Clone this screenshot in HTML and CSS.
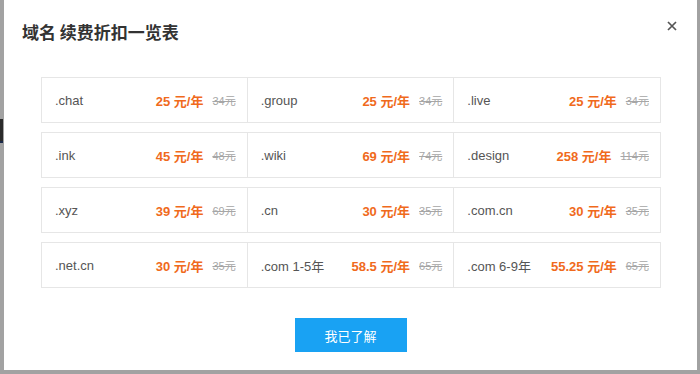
FILE: index.html
```html
<!DOCTYPE html>
<html lang="zh-CN">

<head>
    <meta charset="UTF-8">
    <meta name="viewport" content="width=device-width, initial-scale=1.0">
    <title>域名续费折扣一览表</title>
    <link rel="stylesheet" href="styles.css">
</head>

<body>
    <!-- 背景页面露出的一小条 -->
    <div class="backdrop-edge">
        <span class="backdrop-mark"></span>
    </div>

    <!-- 弹窗 -->
    <div class="dialog">
        <div class="dialog-header">
            <h2>域名 续费折扣一览表</h2>
            <a class="dialog-close" href="#">
                <svg width="10" height="10" viewBox="0 0 10 10">
                    <path d="M1 1 L9 9 M9 1 L1 9" stroke="#555" stroke-width="1.7" fill="none" />
                </svg>
            </a>
        </div>

        <ul class="price-list">
            <li><span class="name">.chat</span><span class="price">25 元/年</span><del>34元</del></li>
            <li><span class="name">.group</span><span class="price">25 元/年</span><del>34元</del></li>
            <li><span class="name">.live</span><span class="price">25 元/年</span><del>34元</del></li>
            <li><span class="name">.ink</span><span class="price">45 元/年</span><del>48元</del></li>
            <li><span class="name">.wiki</span><span class="price">69 元/年</span><del>74元</del></li>
            <li><span class="name">.design</span><span class="price">258 元/年</span><del>114元</del></li>
            <li><span class="name">.xyz</span><span class="price">39 元/年</span><del>69元</del></li>
            <li><span class="name">.cn</span><span class="price">30 元/年</span><del>35元</del></li>
            <li><span class="name">.com.cn</span><span class="price">30 元/年</span><del>35元</del></li>
            <li><span class="name">.net.cn</span><span class="price">30 元/年</span><del>35元</del></li>
            <li><span class="name">.com 1-5年</span><span class="price">58.5 元/年</span><del>65元</del></li>
            <li><span class="name">.com 6-9年</span><span class="price">55.25 元/年</span><del>65元</del></li>
        </ul>

        <div class="dialog-footer">
            <button type="button">我已了解</button>
        </div>
    </div>
</body>

</html>
```

FILE: styles.css
```css
/* 整体 */
body {
    margin: 0;
    width: 700px;
    height: 374px;
    overflow: hidden;
    background-color: #a2a2a2;
    font-family: "Liberation Sans", "Noto Sans CJK SC", sans-serif;
    display: flex;
}

.backdrop-edge {
    width: 4px;
    flex-shrink: 0;
}

.backdrop-mark {
    display: block;
    width: 3px;
    height: 22px;
    margin-top: 119px;
    background-color: #2a2a2a;
    border-bottom: 2px solid #1b2a4a;
}

/* 弹窗 */
.dialog {
    width: 693px;
    height: 370px;
    background-color: #fff;
    display: flex;
    flex-direction: column;
}

.dialog-header {
    display: flex;
    justify-content: space-between;
    align-items: flex-start;
    height: 77px;
    padding: 0 20px 0 18px;
    box-sizing: border-box;
}

.dialog-header h2 {
    margin: 20px 0 0;
    font-size: 17px;
    line-height: 24px;
    font-weight: bold;
    color: #333;
    font-family: "Noto Sans CJK SC", sans-serif;
}

.dialog-close {
    display: block;
    margin-top: 21px;
    width: 10px;
    height: 10px;
    line-height: 0;
}

/* 价格列表 */
.price-list {
    list-style: none;
    margin: 0 36px 0 37px;
    padding: 0;
    display: grid;
    grid-template-columns: repeat(3, 1fr);
    row-gap: 9px;
}

.price-list li {
    height: 46px;
    box-sizing: border-box;
    border: 1px solid #e6e6e6;
    margin-left: -1px;
    display: flex;
    align-items: center;
    padding: 0 11px 0 13px;
    font-size: 13px;
}

.price-list li:nth-child(3n+1) {
    margin-left: 0;
}

.price-list .name {
    flex: 1;
    color: #555;
}

.price-list .price {
    color: #f06a1c;
    font-weight: bold;
}

.price-list del {
    margin-left: 9px;
    font-size: 11px;
    color: #a6a6a6;
}

/* 按钮 */
.dialog-footer {
    display: flex;
    justify-content: center;
    padding-top: 30px;
}

.dialog-footer button {
    width: 112px;
    height: 34px;
    border: none;
    background-color: #19a2f3;
    color: #fff;
    font-size: 13px;
    font-family: "Noto Sans CJK SC", sans-serif;
    cursor: pointer;
}
```
